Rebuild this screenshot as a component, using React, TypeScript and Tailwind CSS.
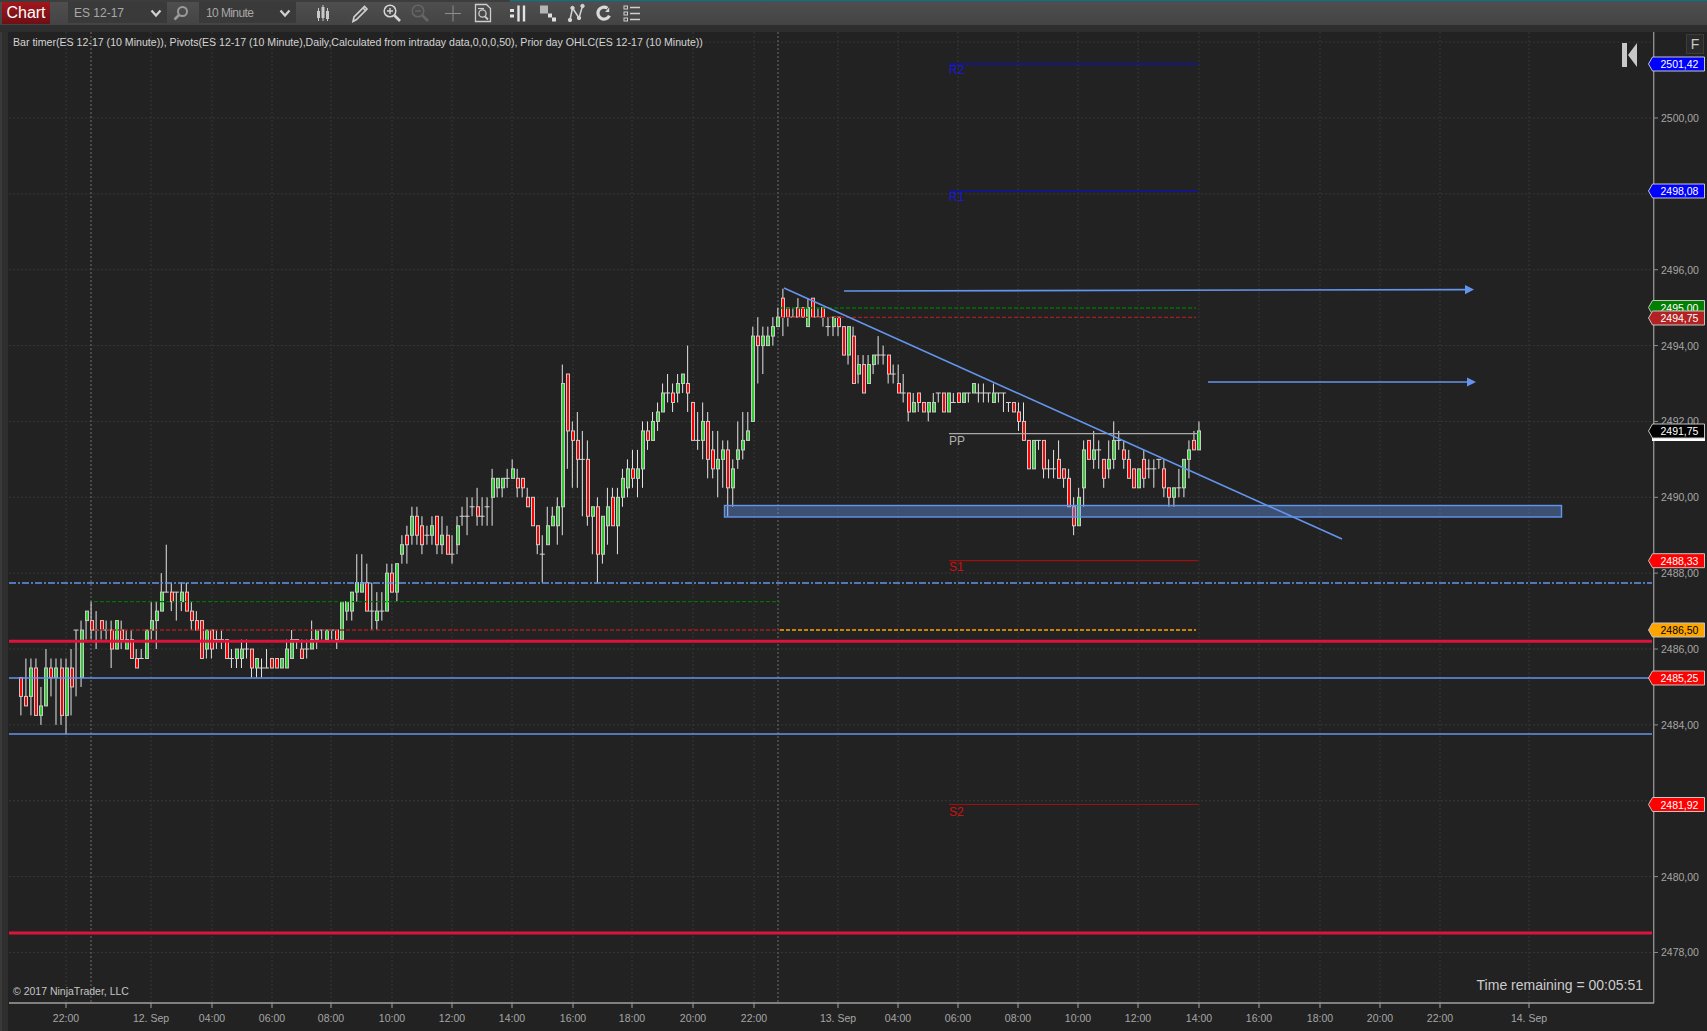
import { ReactNode } from "react";

type Bar = [number, number, number, number, number];
const D = 0;
const R = 1;
const G = 2;

// kind, body top, body bottom, high, low (in ticks above 2480)
const bars: Bar[] = [
  [R,21,19,21,17],[R,19,18,23,18],[G,22,19,23,17],[R,22,17,23,17],[G,18,17,20,16],[G,22,18,24,18],[R,22,21,23,19],[G,22,21,23,16],[R,22,17,23,16],[G,22,17,23,15],
  [R,22,20,24,17],[D,26,26,26,19],[G,26,21,27,20],[G,28,27,28,25],[R,27,26,29,25],[D,26,26,28,24],[R,27,26,27,25],[D,26,26,27,25],[R,26,24,27,22],[G,27,24,27,24],
  [R,26,25,27,24],[G,25,24,26,24],[R,25,23,26,23],[R,23,22,24,22],[D,23,23,24,23],[G,26,23,26,23],[G,27,26,29,25],[G,28,27,29,24],[G,30,28,32,28],[D,30,30,35,30],
  [R,30,29,31,28],[D,30,30,30,27],[G,30,29,31,28],[R,30,28,31,28],[R,28,27,29,26],[R,27,26,28,26],[R,27,23,27,23],[G,26,24,26,23],[R,26,24,26,23],[D,25,25,26,24],
  [D,25,25,26,24],[R,25,23,25,23],[D,23,23,24,22],[G,24,23,24,22],[G,24,23,25,22],[D,24,24,25,23],[R,24,22,24,21],[G,23,22,23,21],[D,22,22,23,21],[D,22,22,24,22],
  [R,23,22,23,22],[R,23,22,23,22],[G,23,22,23,22],[G,24,22,25,22],[G,25,23,26,23],[D,25,25,25,24],[R,24,23,25,23],[D,24,24,25,23],[G,25,24,27,24],[G,26,25,26,24],
  [D,26,26,26,25],[G,26,25,26,25],[D,26,26,26,25],[R,26,25,26,24],[G,29,25,29,25],[G,29,28,29,27],[G,30,28,30,27],[G,31,30,34,29],[G,31,30,34,30],[R,31,28,33,28],
  [D,28,28,31,26],[G,28,27,30,26],[D,28,28,30,27],[G,32,28,33,28],[R,32,30,33,30],[G,33,30,33,29],
  // 76
  [G,35,34,36,33],[R,36,35,37,33],[G,38,36,39,35],[R,38,36,39,35],[R,37,35,38,34],[D,36,36,37,35],[G,37,36,38,35],[R,38,35,38,34],[G,36,35,38,34],[R,36,34,37,34],
  [D,34,34,36,33],[G,37,35,38,34],[D,38,38,39,37],[D,38,38,40,36],[D,39,39,40,38],[R,39,38,41,37],[D,38,38,40,37],[D,39,39,40,37],[G,42,40,43,37],[G,42,41,42,40],
  [G,42,41,42,40],[D,42,42,43,41],[G,43,42,44,42],[R,42,41,43,40],[R,42,41,42,40],[R,40,39,41,39],[R,40,37,40,37],[R,37,35,37,34],[D,34,34,36,31],[G,37,35,39,35],
  [G,38,37,39,37],[G,39,37,40,35],[G,52,39,54,36],[R,53,47,53,43],[R,47,46,48,41],[R,46,44,49,41],[D,44,44,47,38],[R,44,38,46,37],[G,39,38,39,34],[R,39,34,40,31],
  [G,38,34,38,33],[G,39,37,41,35],[R,40,37,41,37],[G,40,37,41,34],[G,42,40,43,39],[G,43,41,44,40],[R,43,42,45,41],[G,43,42,45,40],[G,47,43,48,41],[R,47,46,48,45],
  [G,48,46,49,46],[G,49,48,50,47],[G,51,49,52,49],[D,51,51,53,50],[R,51,50,52,49],[G,52,51,53,50],[G,53,52,53,51],[R,52,51,56,49],[R,50,46,50,46],[D,46,46,49,45],
  [G,48,46,50,44],[R,48,44,49,42],[R,45,43,47,42],[G,44,43,47,40],[G,45,44,46,41],[R,45,41,46,38],[G,43,41,44,39],[G,45,44,48,43],[G,46,45,49,44],[G,47,46,49,46],
  [G,57,48,58,48],[R,57,56,59,52],
  // 148
  [G,57,56,58,53],[G,57,56,58,56],[G,58,57,59,56],[G,59,58,60,58],[R,61,59,62,57],[R,60,59,60,58],[D,59,59,60,59],[R,60,59,61,59],[R,60,59,60,59],[G,60,58,61,58],
  [R,61,59,61,59],[D,59,59,60,59],[R,60,59,60,58],[D,58,58,59,57],[G,59,58,59,57],[R,59,58,59,57],[R,58,55,58,55],[G,58,55,58,54],[R,57,52,58,52],[G,54,53,55,52],
  [R,54,51,55,51],[G,54,52,55,52],[G,55,54,55,53],[D,55,55,57,54],[D,55,55,56,54],[R,55,53,55,52],[D,53,53,54,52],[R,52,51,54,51],[D,51,51,53,50],[R,51,49,51,48],
  [G,50,49,51,49],[R,51,50,51,49],[R,50,49,50,49],[G,50,49,50,48],[G,50,49,51,49],[D,51,51,51,50],[R,51,49,51,49],[G,51,49,51,49],[D,50,50,51,50],[R,51,50,51,50],
  [G,51,50,51,50],[D,51,51,51,50],[G,52,51,52,51],[D,51,51,52,50],[D,51,51,52,50],[D,51,51,51,50],[G,51,50,52,50],[D,51,51,51,50],[D,51,51,51,49],[D,50,50,50,49],
  [R,50,49,50,49],[R,49,48,50,47],[R,48,46,50,46],[R,46,43,46,43],[G,46,43,46,43],[D,46,46,46,45],[R,46,43,46,42],[D,43,43,44,42],[D,43,43,45,42],[R,44,42,46,42],
  [R,43,42,43,41],[R,42,39,43,39],[R,39,37,40,36],[G,40,37,41,37],[G,45,41,46,39],[R,46,44,46,44],[G,45,44,47,43],[D,45,45,46,43],[R,44,42,44,41],[G,44,43,46,42],
  [G,46,44,48,43],[D,46,46,47,45],[R,45,44,46,43],[R,44,42,45,42],[R,43,41,43,41],[G,43,41,43,41],[R,44,42,45,41],[D,43,43,44,42],[D,43,43,44,41],[D,44,44,44,43],
  [R,43,41,44,40],[R,41,40,41,39],[G,41,40,41,39],[D,41,41,43,40],[G,44,41,44,40],[G,45,44,46,42],[R,46,45,47,45],[G,47,45,48,45],
];

const barX = (i: number) => 20.9 + i * 5.013;
const tickY = (t: number) => 118 + (80 - t) * 9.4825;
const priceY = (p: number) => 118 + (2500 - p) * 37.93;

const gridX = [66, 151, 212, 272, 331, 392, 452, 512, 573, 632, 693, 754, 838, 898, 958, 1018, 1078, 1138, 1199, 1259, 1320, 1380, 1440, 1529];
const timeLabels = ["22:00", "12. Sep", "04:00", "06:00", "08:00", "10:00", "12:00", "14:00", "16:00", "18:00", "20:00", "22:00", "13. Sep", "04:00", "06:00", "08:00", "10:00", "12:00", "14:00", "16:00", "18:00", "20:00", "22:00", "14. Sep"];
const axisPrices = [2500, 2498, 2496, 2494, 2492, 2490, 2488, 2486, 2484, 2482, 2480, 2478];
// these two sit fully behind a price tag
const hiddenLabels = [2498, 2482];

const tags = [
  { y: 64, text: "2501,42", bg: "fill-[#0000ff]", fg: "fill-white" },
  { y: 191, text: "2498,08", bg: "fill-[#0000ff]", fg: "fill-white" },
  { y: 307.5, text: "2495,00", bg: "fill-[#008000]", fg: "fill-white" },
  { y: 318, text: "2494,75", bg: "fill-[#b22222]", fg: "fill-white" },
  { y: 431, text: "2491,75", bg: "fill-black", fg: "fill-white" },
  { y: 560.7, text: "2488,33", bg: "fill-[#ff0000]", fg: "fill-white" },
  { y: 630, text: "2486,50", bg: "fill-[#ffa500]", fg: "fill-black" },
  { y: 678, text: "2485,25", bg: "fill-[#ff0000]", fg: "fill-white" },
  { y: 804.5, text: "2481,92", bg: "fill-[#ff0000]", fg: "fill-white" },
];

const Candle = ({ bar, i }: { bar: Bar; i: number }) => {
  const [kind, top, bottom, high, low] = bar;
  const x = barX(i);
  const left = Math.round(x - 1.5) + 0.5;
  return (
    <g>
      <line x1={x} x2={x} y1={tickY(high)} y2={tickY(low)} className="stroke-[#e4e4e4] stroke-1" />
      {kind === D ? (
        <line x1={x - 2.5} x2={x + 2.5} y1={tickY(top)} y2={tickY(top)} className="stroke-[#d4d4d4] stroke-1" />
      ) : (
        <rect
          x={left}
          y={tickY(top)}
          width={3}
          height={tickY(bottom) - tickY(top)}
          className={kind === R ? "fill-[#ff0000] stroke-[#c8c8c8] stroke-1" : "fill-[#32cd32] stroke-[#c8c8c8] stroke-1"}
        />
      )}
    </g>
  );
};

const ToolIcon = ({ className, children }: { className: string; children: ReactNode }) => (
  <svg viewBox="0 0 20 20" className={`w-5 h-5 shrink-0 ${className}`} fill="none" stroke="currentColor">
    {children}
  </svg>
);

const Select = ({ label, className, labelClass }: { label: string; className: string; labelClass?: string }) => (
  <div className={`h-[21px] bg-[#3a3a3a] flex items-center justify-between pl-[6px] pr-[5px] text-[12px] text-[#a8a8a8] ${className}`}>
    <span className={labelClass}>{label}</span>
    <svg viewBox="0 0 12 12" className="w-3 h-3" fill="none" stroke="#d0d0d0" strokeWidth="2.2">
      <path d="M1.5 3.5 6 8.5l4.5-5" />
    </svg>
  </div>
);

const Toolbar = () => (
  <div className="h-[25px] flex items-center pl-[2px] bg-gradient-to-b from-[#4f4f4f] to-[#444444] relative">
    <div className="absolute top-0 left-0 w-[510px] h-[2px] bg-[#3d3d3d]" />
    <div className="absolute top-0 right-0 left-[510px] h-px bg-[#00788a]" />
    <div className="relative w-[48px] h-[22px] flex items-center justify-center text-[16px] text-white bg-gradient-to-b from-[#a3161d] to-[#6d1015]">
      Chart
    </div>
    <Select label="ES 12-17" className="w-[99px] ml-[18px]" />
    <svg viewBox="0 0 16 16" className="w-4 h-4 ml-[6px] text-[#9a9a9a]" fill="none" stroke="currentColor" strokeWidth="2">
      <circle cx="9.5" cy="6.5" r="4.5" />
      <path d="M6 10 1.5 14.5" strokeWidth="2.6" />
    </svg>
    <Select label="10 Minute" labelClass="tracking-[-0.6px] pl-px" className="w-[97px] ml-[10px]" />
    <ToolIcon className="ml-[17px] text-[#c9c9c9]">
      <path d="M5.5 5v13M10 2v16M14.5 5v13" strokeWidth="1" />
      <path d="M5.5 8v7M10 4v11M14.5 8v8" strokeWidth="3" />
    </ToolIcon>
    <ToolIcon className="ml-[17px] text-[#d0d0d0]">
      <path d="M3 18.5 4 14 14.5 3.5l2.5 2.5L6.5 16.5z" strokeWidth="1.6" />
      <path d="M13 5l3 3" strokeWidth="1.6" />
    </ToolIcon>
    <ToolIcon className="ml-[12px] text-[#d4d4d4]">
      <circle cx="8" cy="8" r="5.8" strokeWidth="1.5" />
      <path d="M5 8h6M8 5v6" strokeWidth="1.4" />
      <path d="M12.5 12.5 18 18" strokeWidth="2.6" />
    </ToolIcon>
    <ToolIcon className="ml-[8px] text-[#656565]">
      <circle cx="8" cy="8" r="5.8" strokeWidth="1.5" />
      <path d="M5 8h6" strokeWidth="1.4" />
      <path d="M12.5 12.5 18 18" strokeWidth="2.6" />
    </ToolIcon>
    <ToolIcon className="ml-[13px] text-[#8e8e8e]">
      <path d="M2 10.5h16M10 2.5v16" strokeWidth="1" />
    </ToolIcon>
    <ToolIcon className="ml-[10px] text-[#cdcdcd]">
      <path d="M2.5 1.5h11l4 4v13h-15z" strokeWidth="1.3" />
      <circle cx="9.5" cy="10.5" r="3.6" strokeWidth="1.3" />
      <path d="M12 13.5l3 3" strokeWidth="1.8" />
      <path d="M5 5.5h6" strokeWidth="1.2" />
    </ToolIcon>
    <ToolIcon className="ml-[15px] text-[#e2e2e2]">
      <path d="M2 7.5h4M2 13h4" strokeWidth="3" />
      <path d="M10.5 2.5v16M16 2.5v16" strokeWidth="2.4" />
    </ToolIcon>
    <ToolIcon className="ml-[10px] text-[#d6d6d6]">
      <rect x="2" y="2.5" width="8" height="8" fill="#b5b5b5" stroke="none" />
      <rect x="10" y="10.5" width="4" height="4" fill="#e0e0e0" stroke="none" />
      <rect x="14" y="14.5" width="4" height="4" fill="#e0e0e0" stroke="none" />
    </ToolIcon>
    <ToolIcon className="ml-[8px] text-[#d4d4d4]">
      <path d="M4 17 6.5 5l6.5 10L16.5 3" strokeWidth="1.5" />
      <circle cx="4" cy="17" r="1.7" fill="currentColor" />
      <circle cx="6.5" cy="5" r="1.7" fill="currentColor" />
      <circle cx="13" cy="15" r="1.7" fill="currentColor" />
      <circle cx="16.5" cy="3" r="1.7" fill="currentColor" />
    </ToolIcon>
    <ToolIcon className="ml-[8px] text-[#dadada]">
      <path d="M13.4 5.2A6 6 0 1 0 15.4 12.6" strokeWidth="3.2" />
      <path d="M15.2 4.5v4.5h-4z" fill="currentColor" stroke="none" />
    </ToolIcon>
    <ToolIcon className="ml-[8px] text-[#cfcfcf]">
      <rect x="2" y="3" width="3.5" height="3" strokeWidth="1" />
      <rect x="2" y="9" width="3.5" height="3" strokeWidth="1" />
      <rect x="2" y="15" width="3.5" height="3" strokeWidth="1" />
      <path d="M8 4.5h10M8 10.5h10M8 16.5h10" strokeWidth="1.6" />
    </ToolIcon>
  </div>
);

const Chart = () => (
  <svg viewBox="8 32 1699 999" className="flex-1 h-[999px] block bg-[#222222]">
    {/* grid */}
    {gridX.map((x) => (
      <line key={x} x1={x} x2={x} y1={32} y2={1003} strokeDasharray="2 2" className="stroke-[#373737] stroke-1" />
    ))}
    {[...axisPrices, 2502].map((p) => (
      <line key={p} x1={9} x2={1654} y1={priceY(p)} y2={priceY(p)} strokeDasharray="2 2" className="stroke-[#373737] stroke-1" />
    ))}
    <line x1={91} x2={91} y1={32} y2={1003} strokeDasharray="2 2" className="stroke-[#555555] stroke-[1.5]" />
    <line x1={778} x2={778} y1={32} y2={1003} strokeDasharray="2 2" className="stroke-[#555555] stroke-[1.5]" />

    <g>
      {bars.map((bar, i) => (
        <Candle key={i} bar={bar} i={i} />
      ))}
    </g>

    {/* indicator lines */}
    <line x1={949} x2={1198} y1={64} y2={64} className="stroke-[#0a0ae6] stroke-[1.2]" />
    <line x1={949} x2={1198} y1={190.5} y2={190.5} className="stroke-[#0a0ae6] stroke-[1.2]" />
    <line x1={949} x2={1198} y1={433.7} y2={433.7} className="stroke-[#a9a9a9] stroke-[1.3]" />
    <line x1={949} x2={1198} y1={560.6} y2={560.6} className="stroke-[#9c1010] stroke-[1.2]" />
    <line x1={949} x2={1198} y1={804.5} y2={804.5} className="stroke-[#9c1010] stroke-[1.2]" />
    <line x1={780} x2={1196} y1={308} y2={308} strokeDasharray="4 2" className="stroke-[#007000] stroke-[1.3]" />
    <line x1={780} x2={1196} y1={317.3} y2={317.3} strokeDasharray="4 2" className="stroke-[#a02020] stroke-[1.3]" />
    <line x1={94} x2={780} y1={601.7} y2={601.7} strokeDasharray="4 2" className="stroke-[#007000] stroke-[1.3]" />
    <line x1={94} x2={780} y1={630} y2={630} strokeDasharray="4 2" className="stroke-[#a02020] stroke-[1.3]" />
    <line x1={780} x2={1196} y1={630} y2={630} strokeDasharray="4 2" className="stroke-[#ffa500] stroke-[1.3]" />
    <line x1={9} x2={1652} y1={583} y2={583} strokeDasharray="7 2 2 2" className="stroke-[#6495ed] stroke-[1.4]" />
    <line x1={9} x2={1652} y1={641.3} y2={641.3} className="stroke-[#dc143c] stroke-[3]" />
    <line x1={9} x2={1652} y1={933} y2={933} className="stroke-[#dc143c] stroke-[3]" />
    <line x1={9} x2={1652} y1={678} y2={678} className="stroke-[#6495ed] stroke-[1.6]" />
    <line x1={9} x2={1652} y1={734} y2={734} className="stroke-[#6495ed] stroke-[1.6]" />

    {/* drawing tools */}
    <rect x={724.5} y={505.5} width={837} height={11.5} className="fill-[#6495ed]/40 stroke-[#6495ed] stroke-[1.4]" />
    <line x1={784} y1={288} x2={1342} y2={539} className="stroke-[#6495ed] stroke-[1.6]" />
    <line x1={844} y1={291} x2={1468} y2={289.6} className="stroke-[#6495ed] stroke-[1.6]" />
    <path d="M1465 285l9 4.6-9 4.6z" className="fill-[#6495ed]" />
    <line x1={1208} y1={382} x2={1470} y2={382} className="stroke-[#6495ed] stroke-[1.6]" />
    <path d="M1467 377.4l9 4.6-9 4.6z" className="fill-[#6495ed]" />

    {/* texts on the panel */}
    <g className="text-[12px]">
      <text x={949} y={74} className="fill-[#1818d8]">R2</text>
      <text x={949} y={200.5} className="fill-[#1818d8]">R1</text>
      <text x={949} y={445} className="fill-[#b0b0b0]">PP</text>
      <text x={949} y={570.5} className="fill-[#d01010]">S1</text>
      <text x={949} y={815.5} className="fill-[#d01010]">S2</text>
    </g>
    <text x={13} y={46} className="fill-[#d4d4d4] text-[10.6px]">
      Bar timer(ES 12-17 (10 Minute)), Pivots(ES 12-17 (10 Minute),Daily,Calculated from intraday data,0,0,0,50), Prior day OHLC(ES 12-17 (10 Minute))
    </text>
    <text x={13} y={995} className="fill-[#c4c4c4] text-[10.5px]">© 2017 NinjaTrader, LLC</text>
    <text x={1643} y={990} textAnchor="end" className="fill-[#cccccc] text-[14px]">Time remaining = 00:05:51</text>

    {/* axes */}
    <line x1={1653.7} x2={1653.7} y1={32} y2={1003} className="stroke-[#8c8c8c] stroke-[1.4]" />
    <line x1={9} x2={1654} y1={1003} y2={1003} className="stroke-[#a0a0a0] stroke-[1.4]" />
    {axisPrices.map((p) => (
      <g key={p}>
        <line x1={1654} x2={1658} y1={priceY(p)} y2={priceY(p)} className="stroke-[#8c8c8c] stroke-1" />
        {!hiddenLabels.includes(p) && (
          <text x={1661} y={priceY(p) + 4} className="fill-[#a6a6a6] text-[10.5px]">{p},00</text>
        )}
      </g>
    ))}
    {timeLabels.map((label, i) => (
      <g key={i}>
        <line x1={gridX[i]} x2={gridX[i]} y1={1003} y2={1008} className="stroke-[#a0a0a0] stroke-1" />
        <text x={gridX[i]} y={1022} textAnchor="middle" className="fill-[#a6a6a6] text-[10.5px]">{label}</text>
      </g>
    ))}

    {/* price tags */}
    <rect x={1652} y={431} width={53} height={10} className="fill-white" />
    {tags.map((tag) => (
      <g key={tag.text}>
        <polygon
          points={`1648.5,${tag.y} 1652.5,${tag.y - 7} 1704.5,${tag.y - 7} 1704.5,${tag.y + 7} 1652.5,${tag.y + 7}`}
          className={`${tag.bg} stroke-[#c4c4c4] stroke-1`}
        />
        <text x={1660.5} y={tag.y + 4} className={`${tag.fg} text-[10.5px]`}>{tag.text}</text>
      </g>
    ))}

    {/* F button and go-to-end arrow */}
    <rect x={1686.5} y={34.5} width={17} height={19} className="fill-[#2a2a2a] stroke-[#3c3c3c] stroke-1" />
    <text x={1695} y={49} textAnchor="middle" className="fill-[#c8c8c8] text-[14px]">F</text>
    <rect x={1622} y={43} width={5} height={24} className="fill-[#c8c8c8]" />
    <path d="M1637 43v24l-9-12z" className="fill-[#c8c8c8]" />
  </svg>
);

export default function App() {
  return (
    <div className="w-[1707px] h-[1031px] overflow-hidden flex flex-col bg-[#2e2e2e] font-['Liberation_Sans',Arial,sans-serif]">
      <Toolbar />
      <div className="flex-1 flex pt-[7px]">
        <div className="w-2 border-l-2 border-[#3a3a3a]" />
        <Chart />
      </div>
    </div>
  );
}
